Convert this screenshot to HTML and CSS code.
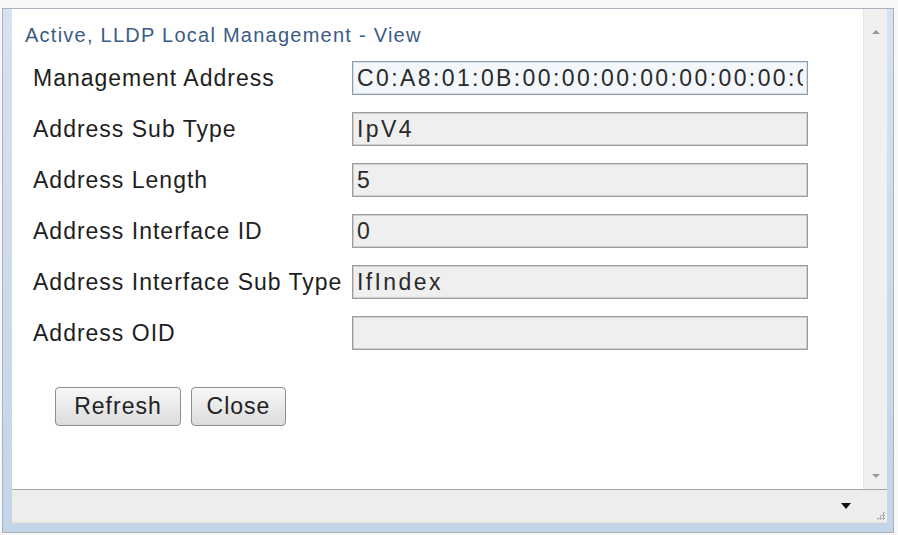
FILE: index.html
```html
<!DOCTYPE html>
<html lang="en">

<head>
    <meta charset="UTF-8">
    <meta name="viewport" content="width=device-width, initial-scale=1.0">
    <title>LLDP Local Management</title>
    <link rel="stylesheet" href="styles.css">
</head>

<body>
    <div class="window">
        <div class="main">
            <div class="content">
                <div class="title">Active, LLDP Local Management - View</div>
                <div class="form">
                    <label for="addr">Management Address</label>
                    <input type="text" class="field field-focus" id="addr" value="C0:A8:01:0B:00:00:00:00:00:00:00:00:00:00:00:00" readonly>

                    <label for="subtype">Address Sub Type</label>
                    <input type="text" class="field" id="subtype" value="IpV4" readonly>

                    <label for="len">Address Length</label>
                    <input type="text" class="field" id="len" value="5" readonly>

                    <label for="ifid">Address Interface ID</label>
                    <input type="text" class="field" id="ifid" value="0" readonly>

                    <label for="ifsub">Address Interface Sub Type</label>
                    <input type="text" class="field" id="ifsub" value="IfIndex" readonly>

                    <label for="oid">Address OID</label>
                    <input type="text" class="field" id="oid" value="" readonly>
                </div>
                <div class="buttons">
                    <button class="btn btn-refresh">Refresh</button>
                    <button class="btn btn-close">Close</button>
                </div>
            </div>
            <div class="scrollbar">
                <span class="arrow-up"></span>
                <span class="arrow-down"></span>
            </div>
        </div>
        <div class="status">
            <span class="dropdown"></span>
            <!-- resize grip -->
            <span class="grip"></span>
        </div>
    </div>
</body>

</html>
```

FILE: styles.css
```css
body {
    margin: 0;
    background-color: #f8f8f8;
    font-family: "Liberation Sans", Arial, sans-serif;
}

.window {
    margin: 8px 4px 0 2px;
    height: 525px;
    box-sizing: border-box;
    border: 1px solid #a9b2bc;
    background: linear-gradient(#d6e2ef, #c3d5e8);
    padding: 0 6px 9px 9px;
    display: flex;
    flex-direction: column;
}

.main {
    display: flex;
    height: 480px;
}

.content {
    flex: 1;
    background-color: #fff;
    padding: 14px 0 0 13px;
}

.title {
    font-size: 20px;
    line-height: 24px;
    letter-spacing: 1.25px;
    color: #3b5c86;
}

.form {
    display: grid;
    grid-template-columns: 319px 456px;
    row-gap: 17px;
    margin: 14px 0 0 8px;
    align-items: center;
}

.form label {
    font-size: 23px;
    letter-spacing: 1px;
    color: #1e1e1e;
}

.field {
    height: 34px;
    box-sizing: border-box;
    border: 1px solid #9c9c9c;
    box-shadow: inset 0 0 0 1px #cfcfcf;
    background-color: #efefef;
    padding: 0 4px;
    font-family: "Liberation Sans", Arial, sans-serif;
    font-size: 23px;
    letter-spacing: 2.4px;
    color: #2a2a2a;
    outline: none;
}

.field-focus {
    background-color: #f3f7fb;
    border-color: #8e9cab;
    box-shadow: inset 0 0 0 1px #d6e0ea;
}

.buttons {
    display: flex;
    gap: 10px;
    margin: 37px 0 0 30px;
}

.btn {
    height: 39px;
    border: 1px solid #8e8e8e;
    border-radius: 4px;
    background: linear-gradient(#f7f7f7, #dcdcdc);
    font-family: "Liberation Sans", Arial, sans-serif;
    font-size: 23px;
    letter-spacing: 1px;
    color: #222;
    padding: 0;
    cursor: pointer;
}

.btn-refresh {
    width: 126px;
}

.btn-close {
    width: 95px;
}

.scrollbar {
    width: 24px;
    box-sizing: border-box;
    background-color: #f0f0f0;
    border-left: 1px solid #e6e6e6;
    display: flex;
    flex-direction: column;
    justify-content: space-between;
    align-items: center;
    padding: 21px 0 11px;
}

.arrow-up {
    width: 0;
    height: 0;
    border-left: 4px solid transparent;
    border-right: 4px solid transparent;
    border-bottom: 4px solid #9a9a9a;
}

.arrow-down {
    width: 0;
    height: 0;
    border-left: 4px solid transparent;
    border-right: 4px solid transparent;
    border-top: 4px solid #9a9a9a;
}

.status {
    position: relative;
    height: 34px;
    box-sizing: border-box;
    border-top: 1px solid #a6a6a6;
    border-bottom: 1px solid #f0ddd4;
    background-color: #ededed;
    display: flex;
    justify-content: flex-end;
    align-items: center;
    padding-right: 36px;
}

.dropdown {
    width: 0;
    height: 0;
    border-left: 5px solid transparent;
    border-right: 5px solid transparent;
    border-top: 6px solid #111;
}

.grip {
    position: absolute;
    right: 2px;
    bottom: 2px;
    width: 9px;
    height: 9px;
    background: radial-gradient(circle, #b0b0b0 1px, transparent 1.2px) 0 0 / 3px 3px;
    clip-path: polygon(100% 0, 100% 100%, 0 100%);
}
```
